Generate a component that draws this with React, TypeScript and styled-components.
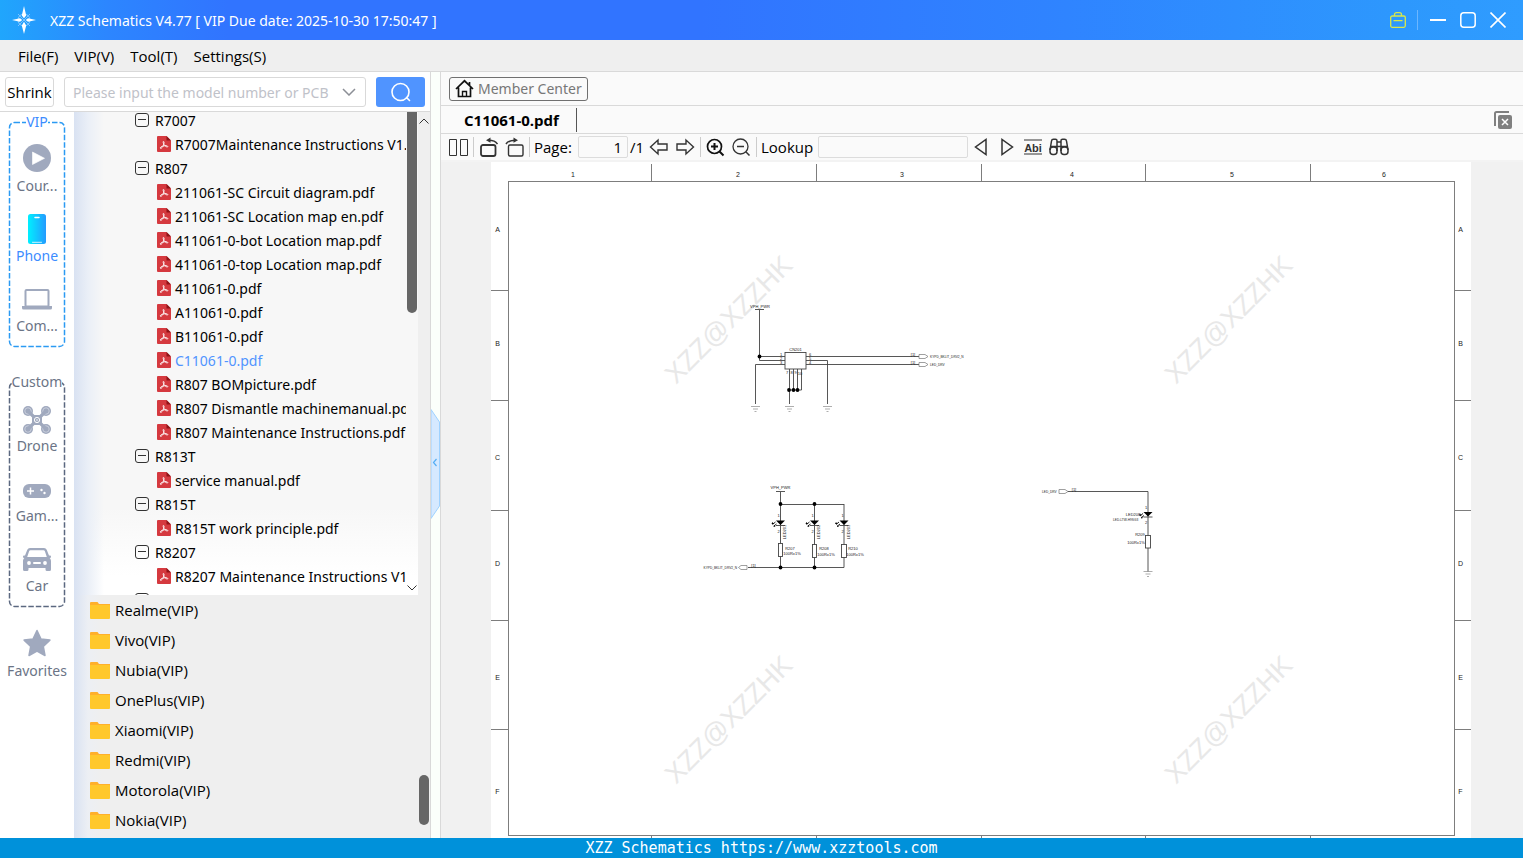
import React from "react";
import styled, { createGlobalStyle, css } from "styled-components";

const GlobalStyle = createGlobalStyle`
  * { box-sizing: border-box; }
  html, body, #root { height: 100%; }
  body {
    margin: 0;
    overflow: hidden;
    font-family: "Open Sans", "Noto Sans", sans-serif;
    font-size: 15px;
    line-height: 24px;
    color: #000;
    background: #f1f1f1;
  }
  button, input {
    font: inherit;
    color: inherit;
    margin: 0;
    padding: 0;
    border: 0;
    background: none;
  }
  button { cursor: pointer; }
  ul { list-style: none; margin: 0; padding: 0; }
  svg { display: block; flex: none; }
`;

const compactText = css`
  font-family: "Noto Sans", "Open Sans", sans-serif;
  font-size: 14px;
`;

const Window = styled.div`
  height: 100vh;
  display: flex;
  flex-direction: column;
`;

const TitleBar = styled.header`
  height: 40px;
  flex: none;
  display: flex;
  align-items: center;
  gap: 14px;
  padding: 0 16px 0 12px;
  color: #fff;
  background: linear-gradient(90deg, #20a6fc 0%, #2c86ff 7%, #3174ff 15%, #3174ff 46%, #2f84ff 70%, #2d98fd 92%, #2f9cff 100%);
`;

const Title = styled.h1`
  ${compactText}
  flex: 1;
  margin: 0;
  padding-top: 2px;
  font-weight: 400;
  white-space: nowrap;
`;

const WindowButtons = styled.div`
  display: flex;
  align-items: center;
  gap: 12px;
`;

const WindowButton = styled.button`
  width: 18px;
  height: 20px;
  display: grid;
  place-items: center;
`;

const TitleDivider = styled.span`
  width: 1px;
  height: 20px;
  margin: 0 -1px 0 -2px;
  background: #6cb6ff;
`;

const MenuBar = styled.nav`
  height: 32px;
  flex: none;
  display: flex;
  align-items: center;
  gap: 16px;
  padding: 0 18px;
  background: #efefef;
  border-bottom: 1px solid #d9d9d9;
`;

const MenuItem = styled.button`
  white-space: nowrap;
`;

const Body = styled.div`
  flex: 1;
  min-height: 0;
  display: flex;
`;

const LeftPanel = styled.section`
  width: 431px;
  flex: none;
  display: flex;
  flex-direction: column;
  border-right: 1px solid #d9d9d9;
  background: #fff;
`;

const SearchRow = styled.form`
  height: 40px;
  flex: none;
  display: flex;
  align-items: center;
  gap: 10px;
  padding: 0 5px;
  border-bottom: 1px solid #d9d9d9;
`;

const ShrinkButton = styled.button`
  width: 49px;
  height: 30px;
  border: 1px solid #d9d9d9;
  border-radius: 3px;
`;

const ModelBox = styled.div`
  flex: 1;
  height: 30px;
  display: flex;
  align-items: center;
  gap: 6px;
  padding: 0 9px 0 8px;
  border: 1px solid #d9d9d9;
  border-radius: 3px;
`;

const ModelInput = styled.input`
  ${compactText}
  flex: 1;
  min-width: 0;
  padding-top: 2px;
  outline: none;
  &::placeholder { color: #bfc2c9; opacity: 1; }
`;

const SearchButton = styled.button`
  width: 49px;
  height: 30px;
  display: grid;
  place-items: center;
  border-radius: 3px;
  background: #5094ff;
`;

const LeftContent = styled.div`
  flex: 1;
  min-height: 0;
  display: flex;
`;

const SideNav = styled.nav`
  ${compactText}
  width: 74px;
  flex: none;
`;

const SideGroup = styled.fieldset<{ $color: string }>`
  position: relative;
  height: 236px;
  margin: 0 8px 24px;
  padding: 9px 0 0;
  border: 0;
  color: ${(p) => p.$color};
  &:last-of-type { margin-bottom: 18px; }
`;

const SideLegend = styled.legend`
  position: relative;
  z-index: 1;
  margin: 0 auto;
  padding: 0;
  line-height: 20px;
  background: #fff;
`;

const DashedFrame = styled.svg`
  position: absolute;
  top: -11px;
  left: 0;
`;

const SideItem = styled.button<{ $active?: boolean }>`
  width: 100%;
  height: 70px;
  display: flex;
  flex-direction: column;
  align-items: center;
  color: ${(p) => (p.$active ? "#3c8cff" : "#6b7486")};
  line-height: 22px;
  white-space: nowrap;
`;

const SideIcon = styled.span`
  height: 34px;
  display: grid;
  place-items: center;
`;

const TreePane = styled.div`
  flex: 1;
  min-width: 0;
  display: flex;
  flex-direction: column;
  background: linear-gradient(90deg, #d9e2f2 0, #eceff4 14px, rgba(239, 239, 239, 0) 28px), #efefef;
`;

const TreeArea = styled.div`
  flex: 1;
  min-height: 0;
  display: flex;
`;

const TreeClip = styled.div`
  ${compactText}
  flex: 1;
  min-width: 0;
  overflow: hidden;
  background:
    linear-gradient(90deg, #d9e2f2 0, #eaeff7 14px, rgba(247, 247, 247, 0) 30px),
    linear-gradient(180deg, #f7f7f7 0, #f7f7f7 82%, #fff 96%);
`;

const TreeList = styled.ul`
  margin-top: -4px;
`;

const TreeRow = styled.li<{ $level: number }>`
  height: 24px;
  padding-left: ${(p) => (p.$level === 0 ? 61 : 83)}px;
`;

const TreeButton = styled.button<{ $active?: boolean }>`
  width: 100%;
  height: 24px;
  display: flex;
  align-items: center;
  gap: ${(p) => (p.$active === undefined ? 6 : 4)}px;
  overflow: hidden;
  white-space: nowrap;
  color: ${(p) => (p.$active ? "#5094ff" : "#000")};
`;

const TreeLabel = styled.span`
  padding-top: 2px;
`;

const InnerScroll = styled.div`
  width: 12px;
  flex: none;
  display: flex;
  flex-direction: column;
  justify-content: space-between;
  align-items: center;
  padding-bottom: 4px;
  background: linear-gradient(180deg, #f7f7f7 0, #f7f7f7 82%, #fff 96%);
`;

const InnerThumb = styled.span`
  width: 10px;
  height: 42%;
  border-radius: 0 0 5px 5px;
  background: #666;
`;

const OuterScroll = styled.div`
  width: 12px;
  flex: none;
  display: flex;
  justify-content: center;
  padding-top: 6px;
  background: #efefef;
`;

const FolderArea = styled.div`
  flex: none;
  display: flex;
  justify-content: space-between;
  align-items: flex-end;
  padding-bottom: 3px;
`;

const FolderRow = styled.button`
  height: 30px;
  display: flex;
  align-items: center;
  gap: 5px;
  padding-left: 16px;
`;

const OuterThumb = styled.span`
  width: 10px;
  height: 50px;
  margin: 0 1px 10px 0;
  border-radius: 5px;
  background: #666;
`;

const Gutter = styled.div`
  width: 10px;
  flex: none;
  display: flex;
  align-items: center;
  padding-top: 18px;
  background: #fbfffb;
  border-right: 1px solid #d9d9d9;
`;

const Viewer = styled.main`
  flex: 1;
  min-width: 0;
  display: flex;
  flex-direction: column;
  background: #f1f1f1;
`;

const ViewerBar = styled.div<{ $height: number }>`
  height: ${(p) => p.$height}px;
  flex: none;
  display: flex;
  align-items: center;
  padding: 0 8px;
  background: #fafafa;
  border-bottom: 1px solid #d9d9d9;
`;

const MemberButton = styled.button`
  ${compactText}
  height: 24px;
  display: flex;
  align-items: center;
  gap: 4px;
  padding: 0 5px;
  border: 1px solid #707070;
  border-radius: 3px;
  color: #777;
`;

const Tabs = styled.div`
  flex: 1;
  display: flex;
`;

const Tab = styled.button`
  height: 24px;
  padding: 0 17px 0 15px;
  border-right: 1px solid #555;
  font-weight: 700;
`;

const CloseTabs = styled.button`
  width: 24px;
  height: 24px;
  display: grid;
  place-items: center;
`;

const Toolbar = styled.div`
  height: 28px;
  flex: none;
  display: flex;
  align-items: center;
  padding: 0 7px;
  background: #fafafa;
  border-bottom: 2px solid #f3f3f3;
`;

const ToolGroup = styled.div<{ $last?: boolean }>`
  height: 20px;
  display: flex;
  align-items: center;
  gap: 6px;
  padding: 0 5px 0 4px;
  border-right: ${(p) => (p.$last ? "0" : "1px solid #ccc")};
  &:first-child { padding-left: 0; }
`;

const ToolButton = styled.button`
  width: 20px;
  height: 22px;
  display: grid;
  place-items: center;
  flex: none;
`;

const Field = styled.label<{ $text: number }>`
  display: grid;
  grid-template-columns: ${(p) => p.$text}px auto;
  align-items: center;
  margin-right: -3px;
  white-space: nowrap;
`;

const FieldInput = styled.input<{ $width: number }>`
  width: ${(p) => p.$width}px;
  height: 22px;
  padding: 0 5px;
  border: 1px solid #dcdcdc;
  border-radius: 2px;
  text-align: right;
  outline: none;
`;

const PageCount = styled.span`
  width: 13px;
  margin-left: -1px;
`;

const Canvas = styled.div`
  flex: 1;
  min-height: 0;
  padding: 0 52px 0 50px;
`;

const Sheet = styled.svg`
  width: 100%;
  height: 100%;
  background: #fff;
  font-family: "Liberation Sans", sans-serif;
`;

const StatusBar = styled.footer`
  height: 20px;
  flex: none;
  color: #fff;
  background: #0091da;
  font: 15px/20px "DejaVu Sans Mono", monospace;
  text-align: center;
`;

const MUTED = "#a0a9be";

const Logo = () => (
  <svg width="24" height="30" viewBox="0 0 24 30">
    <circle cx="12" cy="15" r="6" fill="none" stroke="#9fd3ff" strokeWidth="1" opacity=".8" />
    <path d="M6 9l12 12M18 9L6 21" stroke="#7cc3ff" strokeWidth="1" />
    <path d="M12 1l2.2 9.5L12 13.2l-2.200-2.700zM12 29l2.200-8.500L12 16.800l-2.200 3.700zM0 15l8-1.800L10.300 15 8 16.800zM24 15l-8-1.800L13.700 15l2.300 1.800z" fill="#fff" />
  </svg>
);

const PdfIcon = () => (
  <svg width="14" height="16" viewBox="0 0 14 16">
    <path d="M1 0H9.500L14 4.500V15a1 1 0 0 1-1 1h-12A1 1 0 0 1 0 15v-14A1 1 0 0 1 1 0z" fill="#d5393f" />
    <path d="M9.500 0L14 4.500h-4.500z" fill="#8f1418" />
    <path d="M6.500 5.500c1.200 0 .3 3.200-.7 5S3.200 13 3.300 11.800 7 9.600 9 9.700s2.200 1.300 1.200 1.300S6.900 9 6.400 7.300 6.200 5.500 6.500 5.500z" fill="none" stroke="#fff" strokeWidth=".9" />
  </svg>
);

const CollapseIcon = () => (
  <svg width="14" height="14" viewBox="0 0 14 14">
    <rect x=".5" y=".5" width="13" height="13" rx="2.500" fill="none" stroke="#333" />
    <path d="M3 6.500h8" stroke="#333" />
  </svg>
);

const FolderIcon = () => (
  <svg width="20" height="17" viewBox="0 0 20 17">
    <path d="M0 1a1 1 0 0 1 1-1h6.500l1.500 2H20v4H0z" fill="#ffb02b" />
    <path d="M0 3h19a1 1 0 0 1 1 1v12a1 1 0 0 1-1 1H1a1 1 0 0 1-1-1z" fill="#ffc82b" />
  </svg>
);

const CourseIcon = () => (
  <svg width="28" height="28" viewBox="0 0 28 28">
    <circle cx="14" cy="14" r="14" fill={MUTED} />
    <path d="M9.500 8v12.500l12-6.200z" fill="#fff" stroke="#fff" strokeWidth=".6" strokeLinejoin="round" />
  </svg>
);

const PhoneIcon = () => (
  <svg width="18" height="32" viewBox="0 -2 18 32">
    <defs>
      <linearGradient id="phoneFill" x1="0" y1="0" x2="1" y2="0">
        <stop offset="0" stopColor="#00f0ff" />
        <stop offset="1" stopColor="#249bff" />
      </linearGradient>
    </defs>
    <rect width="18" height="30" rx="2.500" fill="url(#phoneFill)" />
    <path d="M7 3.500h4" stroke="#fff" strokeWidth="1.500" strokeLinecap="round" />
    <path d="M4.500 28.300h9" stroke="#fff" strokeWidth=".8" strokeLinecap="round" />
  </svg>
);

const ComputerIcon = () => (
  <svg width="30" height="24" viewBox="0 -2 30 24">
    <rect x="3.500" y="2" width="23" height="16.500" rx="1" fill="none" stroke={MUTED} strokeWidth="2" />
    <path d="M0 18h30v2a1.500 1.500 0 0 1-1.500 1.500h-27A1.500 1.500 0 0 1 0 20z" fill={MUTED} />
  </svg>
);

const rotors = [[5, 5], [23, 5], [5, 23], [23, 23]];

const DroneIcon = () => (
  <svg width="28" height="32" viewBox="0 -4 28 32">
    {rotors.map(([x, y]) => (
      <g key={`${x}-${y}`}>
        <circle cx={x} cy={y} r="5" fill={MUTED} />
        <circle cx={x} cy={y} r="3.200" fill="none" stroke="#d3d8e3" strokeWidth=".8" />
      </g>
    ))}
    <path d="M4.500 4.500l19 19M23.500 4.500l-19 19" stroke={MUTED} strokeWidth="3.200" strokeLinecap="round" />
    <rect x="9" y="9" width="10" height="10" rx="3" fill={MUTED} />
    <circle cx="14" cy="14" r="2.600" fill="none" stroke="#fff" />
    <circle cx="14" cy="14" r=".8" fill="#fff" />
  </svg>
);

const GameIcon = () => (
  <svg width="28" height="20" viewBox="0 -6 28 20">
    <rect width="28" height="14" rx="6" fill={MUTED} />
    <path d="M7.500 3.500v7M4 7h7" stroke="#fff" strokeWidth="1.500" />
    <circle cx="18.500" cy="6" r="1.200" fill="#fff" />
    <circle cx="21.500" cy="9" r="1.200" fill="#fff" />
  </svg>
);

const CarIcon = () => (
  <svg width="28" height="26" viewBox="0 -3 28 26">
    <path d="M7 0h14a3 3 0 0 1 2.700 1.800L26 7.500h1a1 1 0 0 1 1 1c0 1-.6 1.500-1.400 1.500.7.700 1.400 1.700 1.400 3V21.500a1.500 1.500 0 0 1-1.500 1.500H24a1.500 1.500 0 0 1-1.500-1.500V20h-17v1.500A1.500 1.500 0 0 1 4 23H1.500A1.500 1.500 0 0 1 0 21.500V13c0-1.300.7-2.300 1.400-3C.6 10 0 9.500 0 8.500a1 1 0 0 1 1-1h1L4.300 1.800A3 3 0 0 1 7 0z" fill={MUTED} />
    <path d="M7.500 2.200h13a1.500 1.500 0 0 1 1.400 1L23.800 9H4.200l1.900-5.800a1.500 1.500 0 0 1 1.400-1z" fill="#fff" />
    <circle cx="6" cy="15" r="1.900" fill="#fff" />
    <circle cx="22" cy="15" r="1.900" fill="#fff" />
    <path d="M11 15h6" stroke="#fff" strokeWidth="2" strokeLinecap="round" />
  </svg>
);

const StarIcon = () => (
  <svg width="28" height="28" viewBox="0 0 28 28">
    <path d="M14 1.500l3.900 8.400 9 1.200-6.600 6.300 1.700 9.100-8-4.500-8 4.500 1.700-9.100L1.100 11.100l9-1.200z" fill={MUTED} stroke={MUTED} strokeWidth="1.500" strokeLinejoin="round" />
  </svg>
);

const ToolIcon = ({ children }: { children: React.ReactNode }) => (
  <svg width="20" height="20" viewBox="0 0 20 20" fill="none" stroke="#333" strokeWidth="1.300">
    {children}
  </svg>
);

type SideEntry = { label: string; icon: React.ReactNode; active?: boolean };

const vipEntries: SideEntry[] = [
  { label: "Cour...", icon: <CourseIcon /> },
  { label: "Phone", icon: <PhoneIcon />, active: true },
  { label: "Com...", icon: <ComputerIcon /> },
];

const customEntries: SideEntry[] = [
  { label: "Drone", icon: <DroneIcon /> },
  { label: "Gam...", icon: <GameIcon /> },
  { label: "Car", icon: <CarIcon /> },
];

const tree = [
  { name: "R7007", files: ["R7007Maintenance Instructions V1.pdf"] },
  {
    name: "R807",
    files: [
      "211061-SC Circuit diagram.pdf",
      "211061-SC Location map en.pdf",
      "411061-0-bot Location map.pdf",
      "411061-0-top Location map.pdf",
      "411061-0.pdf",
      "A11061-0.pdf",
      "B11061-0.pdf",
      "C11061-0.pdf",
      "R807 BOMpicture.pdf",
      "R807 Dismantle machinemanual.pdf",
      "R807 Maintenance Instructions.pdf",
    ],
  },
  { name: "R813T", files: ["service manual.pdf"] },
  { name: "R815T", files: ["R815T work principle.pdf"] },
  { name: "R8207", files: ["R8207 Maintenance Instructions V1.pdf"] },
  { name: "", files: [] },
];

const folders = ["Realme", "Vivo", "Nubia", "OnePlus", "Xiaomi", "Redmi", "Motorola", "Nokia"];

function SideBox({ title, color, textColor, entries }: { title: string; color: string; textColor: string; entries: SideEntry[] }) {
  return (
    <SideGroup $color={textColor}>
      <SideLegend>{title}</SideLegend>
      <DashedFrame width="58" height="227" viewBox="0 0 58 227">
        <rect x="1.500" y="1.500" width="55" height="224" rx="5" fill="none" stroke={color} strokeWidth="1.500" strokeDasharray="5.500 2" />
      </DashedFrame>
      {entries.map((e) => (
        <SideItem key={e.label} $active={e.active}>
          <SideIcon>{e.icon}</SideIcon>
          {e.label}
        </SideItem>
      ))}
    </SideGroup>
  );
}

const Ground = ({ x, y }: { x: number; y: number }) => (
  <path d={`M${x - 4.5} ${y}h9M${x - 2.5} ${y + 2.5}h5M${x - 1} ${y + 5}h2`} stroke="#999" strokeWidth=".8" />
);

const Led = ({ x, y }: { x: number; y: number }) => (
  <g>
    <path d={`M${x - 4.5} ${y - 2.5}h9l-4.500 4.500z`} fill="#000" stroke="none" />
    <path d={`M${x - 4.5} ${y + 2.5}h9`} />
    <path d={`M${x - 5} ${y - 1}l-3 2.500M${x - 4} ${y + 1}l-2.500 2`} strokeWidth=".9" stroke="#000" />
    <path d={`M${x - 9} ${y + 1}l1-2 1.500 2zM${x - 7} ${y + 4}l.5-2 1.500 1.500z`} fill="#000" stroke="none" />
  </g>
);

const Dot = ({ x, y }: { x: number; y: number }) => <circle cx={x} cy={y} r="1.900" fill="#000" stroke="none" />;

const Port = ({ x, y, left }: { x: number; y: number; left?: boolean }) => (
  <path
    d={left ? `M${x + 8.5} ${y - 2}h-6l-2.500 2 2.500 2h6z` : `M${x} ${y - 2}h6l3 2-3 2h-6z`}
    fill="#fff"
    stroke="#777"
    strokeWidth=".7"
  />
);

const columnTicks = [651.5, 816.5, 981.5, 1145.5, 1310.5];
const rowTicks = [290.5, 400.5, 510.5, 620.5, 729.5];
const columns = [573, 738, 902, 1072, 1232, 1384];
const rows: [string, number][] = [["A", 229], ["B", 343], ["C", 457], ["D", 563], ["E", 677], ["F", 791]];
const marks = [[728, 320], [1228, 320], [728, 720], [1228, 720]];

function Schematic() {
  return (
    <Sheet viewBox="491 162 980 676" preserveAspectRatio="xMidYMin slice" role="img" aria-label="C11061-0 circuit diagram">
      <g fill="#e8e8e8" fontSize="27" textAnchor="middle">
        {marks.map(([x, y]) => (
          <text key={`${x}-${y}`} transform={`translate(${x + 7} ${y + 6}) rotate(-45)`}>XZZ@XZZHK</text>
        ))}
      </g>
      <g stroke="#7d7d7d" fill="none">
        <rect x="508.500" y="181.500" width="946" height="654" />
        {columnTicks.map((x) => (
          <path key={x} d={`M${x} 164v17M${x} 836v2`} />
        ))}
        {rowTicks.map((y) => (
          <path key={y} d={`M491 ${y}h17M1455 ${y}h16`} />
        ))}
      </g>
      <g fontSize="7" fill="#222" textAnchor="middle">
        {columns.map((x, i) => (
          <text key={x} x={x} y="176.500">{i + 1}</text>
        ))}
        {rows.map(([r, y]) => (
          <React.Fragment key={r}>
            <text x="497.500" y={y + 2.5}>{r}</text>
            <text x="1460.500" y={y + 2.5}>{r}</text>
          </React.Fragment>
        ))}
      </g>

      <g stroke="#444" strokeWidth=".9" fill="none">
        <path d="M755 309.500h9M759.500 310v50.500H785M759.500 356.500H785M785 364.500h-29.500V404" />
        <rect x="785" y="352.500" width="21" height="16.500" />
        <path d="M806 356.500h113M806 364.500h113M806 360.500h21.500V404" />
        <path d="M789.500 369v35M793.500 369v21M797.500 369v21M801.500 369v21H789" />
        <Dot x={759.5} y={356.5} />
        <Dot x={789} y={390} />
        <Dot x={793.5} y={390} />
        <Dot x={797.5} y={390} />
        <Ground x={755.5} y={406.5} />
        <Ground x={789.5} y={406.5} />
        <Ground x={827.5} y={406.5} />
        <Port x={919} y={356.5} />
        <Port x={919} y={364.5} />

        <path d="M776 491.500h9M780.500 492v75.500M780 504.500h64M814.500 504v63M844 504v63.500M748 567.500h96" />
        <rect x="778.500" y="543.500" width="4" height="13" fill="#fff" />
        <rect x="812.500" y="544.500" width="4" height="13" fill="#fff" />
        <rect x="841.500" y="544.500" width="5" height="13" fill="#fff" />
        <Led x={780.5} y={523} />
        <Led x={814.5} y={523} />
        <Led x={844} y={523} />
        <Dot x={780.5} y={504} />
        <Dot x={814.5} y={504} />
        <Dot x={780.5} y={567.5} />
        <Dot x={814.5} y={567.5} />
        <Port x={738.5} y={567.5} left />

        <path d="M1068 491.500h80V572" />
        <rect x="1145.500" y="535.500" width="5" height="12.500" fill="#fff" />
        <Led x={1148} y={514.5} />
        <Ground x={1148} y={571.5} />
        <Port x={1059} y={491.5} />
      </g>

      <g fontSize="4" fill="#222" textAnchor="middle">
        <text x="760" y="307.500">VPH_PWR</text>
        <text x="795.500" y="350.500">CN201</text>
        <text x="913" y="356">[1]</text>
        <text x="913" y="364">[1]</text>
        <text x="781" y="356">1</text>
        <text x="781" y="360">2</text>
        <text x="781" y="364">3</text>
        <text x="810" y="356">6</text>
        <text x="810" y="360">5</text>
        <text x="810" y="364">4</text>
        <text x="787" y="374">7</text>
        <text x="791.500" y="374">8</text>
        <text x="795.500" y="374">9</text>
        <text x="800" y="375">10</text>
        <text x="780.500" y="489">VPH_PWR</text>
        <text x="753.500" y="567">[1]</text>
        <text x="790" y="550">R207</text>
        <text x="792" y="554.500">100R±1%</text>
        <text x="824" y="550">R208</text>
        <text x="826" y="555.500">100R±1%</text>
        <text x="853" y="550">R210</text>
        <text x="855" y="555.500">100R±1%</text>
        <text x="1074" y="491">[1]</text>
        <text x="1133" y="515.500">LED208</text>
        <text x="1140" y="536">R209</text>
        <text x="1136" y="543.500">100R±1%</text>
        {[780, 814, 844].map((x, i) => (
          <React.Fragment key={x}>
            <text x={x - 1.5} y="517">1</text>
            <text x={x - 1.5} y="533">2</text>
            <text transform={`translate(${x + 5.5} 532) rotate(-90)`}>LED20{i + 1}</text>
          </React.Fragment>
        ))}
        <text x="1146" y="509">1</text>
        <text x="1146" y="524">2</text>
      </g>
      <g fontSize="3.200" fill="#222">
        <text x="930" y="357.800">KYPD_BKLIT_DRV2_N</text>
        <text x="930" y="366">LED_DRV</text>
        <text x="703.500" y="569">KYPD_BKLIT_DRV2_N</text>
        <text x="1042" y="493">LED_DRV</text>
        <text x="1113" y="521">LED-LTW-H9SG3</text>
      </g>
    </Sheet>
  );
}

export default function App() {
  return (
    <Window>
      <GlobalStyle />
      <TitleBar>
        <Logo />
        <Title>XZZ Schematics V4.77 [ VIP Due date: 2025-10-30 17:50:47 ]</Title>
        <WindowButtons>
          <WindowButton aria-label="License">
            <svg width="16" height="16" viewBox="0 0 16 16" fill="none" stroke="#d9e84a" strokeWidth="1.300">
              <rect x=".7" y="4" width="14.600" height="11.300" rx="1.500" />
              <path d="M4.500 4V2.700A2 2 0 0 1 6.500.7h3a2 2 0 0 1 2 2V4M3.500 8.700h9" />
            </svg>
          </WindowButton>
          <TitleDivider />
          <WindowButton aria-label="Minimize">
            <svg width="16" height="16" viewBox="0 0 16 16"><path d="M0 8h16" stroke="#fff" strokeWidth="2" /></svg>
          </WindowButton>
          <WindowButton aria-label="Maximize">
            <svg width="16" height="16" viewBox="0 0 16 16"><rect x=".8" y=".8" width="14.400" height="14.400" rx="3" fill="none" stroke="#fff" strokeWidth="1.500" /></svg>
          </WindowButton>
          <WindowButton aria-label="Close">
            <svg width="16" height="16" viewBox="0 0 16 16"><path d="M.5.500l15 15M15.500.500l-15 15" stroke="#fff" strokeWidth="1.600" /></svg>
          </WindowButton>
        </WindowButtons>
      </TitleBar>

      <MenuBar>
        {["File(F)", "VIP(V)", "Tool(T)", "Settings(S)"].map((m) => (
          <MenuItem key={m}>{m}</MenuItem>
        ))}
      </MenuBar>

      <Body>
        <LeftPanel>
          <SearchRow onSubmit={(e) => e.preventDefault()}>
            <ShrinkButton type="button">Shrink</ShrinkButton>
            <ModelBox>
              <ModelInput aria-label="Model number" placeholder="Please input the model number or PCB" />
              <svg width="14" height="8" viewBox="0 0 14 8"><path d="M1 1l6 6 6-6" fill="none" stroke="#8c8f96" strokeWidth="1.500" /></svg>
            </ModelBox>
            <SearchButton aria-label="Search">
              <svg width="20" height="20" viewBox="0 0 20 20" fill="none" stroke="#fff" strokeWidth="1.600">
                <circle cx="9.500" cy="10" r="8.500" />
                <path d="M15.500 15.500l3 3" strokeLinecap="round" />
              </svg>
            </SearchButton>
          </SearchRow>

          <LeftContent>
            <SideNav>
              <SideBox title="VIP" color="#2b9af3" textColor="#3c8cff" entries={vipEntries} />
              <SideBox title="Custom" color="#5b6880" textColor="#6b7486" entries={customEntries} />
              <SideItem>
                <SideIcon><StarIcon /></SideIcon>
                Favorites
              </SideItem>
            </SideNav>

            <TreePane>
              <TreeArea>
                <TreeClip>
                  <TreeList>
                    {tree.map((node) => (
                      <React.Fragment key={node.name}>
                        <TreeRow $level={0}>
                          <TreeButton><CollapseIcon /><TreeLabel>{node.name}</TreeLabel></TreeButton>
                        </TreeRow>
                        {node.files.map((f) => (
                          <TreeRow key={f} $level={1}>
                            <TreeButton $active={f === "C11061-0.pdf"}><PdfIcon /><TreeLabel>{f}</TreeLabel></TreeButton>
                          </TreeRow>
                        ))}
                      </React.Fragment>
                    ))}
                  </TreeList>
                </TreeClip>
                <InnerScroll>
                  <InnerThumb />
                  <svg width="10" height="6" viewBox="0 0 10 6"><path d="M.5.500L5 5 9.500.500" fill="none" stroke="#333" /></svg>
                </InnerScroll>
                <OuterScroll>
                  <svg width="10" height="6" viewBox="0 0 10 6"><path d="M.5 5.500L5 1l4.500 4.500" fill="none" stroke="#333" /></svg>
                </OuterScroll>
              </TreeArea>
              <FolderArea>
                <ul>
                  {folders.map((f) => (
                    <li key={f}>
                      <FolderRow><FolderIcon />{f}(VIP)</FolderRow>
                    </li>
                  ))}
                </ul>
                <OuterThumb />
              </FolderArea>
            </TreePane>
          </LeftContent>
        </LeftPanel>

        <Gutter>
          <button aria-label="Collapse panel">
            <svg width="9" height="111" viewBox="0 0 9 111">
              <path d="M0 .5L8.500 13v84L0 109.500z" fill="#d6e9ff" stroke="#9fd2ff" />
              <path d="M5.500 50L2.500 53.500l3 3.500" fill="none" stroke="#55aef5" strokeWidth="1.200" />
            </svg>
          </button>
        </Gutter>

        <Viewer>
          <ViewerBar $height={34}>
            <MemberButton>
              <svg width="19" height="19" viewBox="0 0 19 19" fill="none" stroke="#111" strokeWidth="1.700">
                <path d="M1 10L9.500 1.800 18 10M3.500 8.500V17.500h12V8.500M14.500 3v3" />
                <path d="M7.500 17.500v-5h4v5" strokeWidth="1.400" />
              </svg>
              Member Center
            </MemberButton>
          </ViewerBar>
          <ViewerBar $height={28}>
            <Tabs>
              <Tab>C11061-0.pdf</Tab>
            </Tabs>
            <CloseTabs aria-label="Close all tabs">
              <svg width="18" height="18" viewBox="0 0 18 18">
                <path d="M1 15V2.500A1.500 1.500 0 0 1 2.500 1H15" fill="none" stroke="#808080" strokeWidth="2" />
                <rect x="4" y="4" width="14" height="14" rx="2" fill="#808080" />
                <path d="M8 8l6 6M14 8l-6 6" stroke="#fff" strokeWidth="1.500" />
              </svg>
            </CloseTabs>
          </ViewerBar>
          <Toolbar>
            <ToolGroup>
              <ToolButton aria-label="Two pages">
                <ToolIcon><path d="M1.500 2.500h7v16h-7zM12.500 2.500h7v16h-7z" strokeWidth="1" /></ToolIcon>
              </ToolButton>
            </ToolGroup>
            <ToolGroup>
              <ToolButton aria-label="Rotate left">
                <ToolIcon>
                  <rect x="3" y="8" width="14.500" height="11" rx="2" strokeWidth="1.800" />
                  <path d="M19.500 7C18 4.500 14.500 3.300 10.500 3.300" strokeWidth="1.500" />
                  <path d="M12.500.5L8 3.300l4.500 2.500z" fill="#333" stroke="none" />
                </ToolIcon>
              </ToolButton>
              <ToolButton aria-label="Rotate right">
                <ToolIcon>
                  <rect x="4.500" y="8" width="14.500" height="11" rx="1.500" strokeWidth="1.400" />
                  <path d="M2 7C3.500 4.500 7 3.300 11.500 3.300" strokeWidth="1.500" />
                  <path d="M9.500.5L14 3.300 9.500 5.800z" fill="#333" stroke="none" />
                </ToolIcon>
              </ToolButton>
            </ToolGroup>
            <ToolGroup>
              <Field $text={44}>
                Page:
                <FieldInput $width={50} defaultValue="1" />
              </Field>
              <PageCount>/1</PageCount>
              <ToolButton aria-label="Previous page">
                <ToolIcon><path d="M1.500 10L9 3v4h9v6H9v4z" strokeWidth="1.400" /></ToolIcon>
              </ToolButton>
              <ToolButton aria-label="Next page">
                <ToolIcon><path d="M18.500 10L11 3v4H2v6h9v4z" strokeWidth="1.400" /></ToolIcon>
              </ToolButton>
            </ToolGroup>
            <ToolGroup>
              <ToolButton aria-label="Zoom in">
                <ToolIcon>
                  <circle cx="9.500" cy="9.500" r="7" strokeWidth="1.700" stroke="#111" />
                  <path d="M14.500 14.500L18.500 18.500M9.500 6v7M6 9.500h7" strokeWidth="2" stroke="#111" />
                </ToolIcon>
              </ToolButton>
              <ToolButton aria-label="Zoom out">
                <ToolIcon>
                  <circle cx="9.500" cy="9.500" r="7.500" />
                  <path d="M14.800 14.800L18.500 18.500M6 9.500h7" strokeWidth="1.500" />
                </ToolIcon>
              </ToolButton>
            </ToolGroup>
            <ToolGroup $last>
              <Field $text={57}>
                Lookup
                <FieldInput $width={150} />
              </Field>
              <ToolButton aria-label="Find previous">
                <ToolIcon><path d="M15 2.500v15L4.500 10z" strokeWidth="1.500" /></ToolIcon>
              </ToolButton>
              <ToolButton aria-label="Find next">
                <ToolIcon><path d="M5 2.500v15L15.500 10z" strokeWidth="1.500" /></ToolIcon>
              </ToolButton>
              <ToolButton aria-label="Match whole word">
                <ToolIcon>
                  <path d="M1 3h18M1 17h18" strokeWidth="1" />
                  <text x="10" y="14.500" textAnchor="middle" fontFamily="Liberation Sans, sans-serif" fontWeight="700" fontSize="11" fill="#333" stroke="none">Abi</text>
                </ToolIcon>
              </ToolButton>
              <ToolButton aria-label="Find">
                <ToolIcon>
                  <path d="M1 13L2.500 4a2 2 0 0 1 2-1.800h2A1.500 1.500 0 0 1 8 3.700V14M19 13L17.500 4a2 2 0 0 0-2-1.800h-2A1.500 1.500 0 0 0 12 3.700V14M8 5h4M8 9.500h4M2 9.500h6M12 9.500h6" strokeWidth="1.500" />
                  <rect x="1" y="10" width="7" height="7.500" rx="3" strokeWidth="1.500" />
                  <rect x="12" y="10" width="7" height="7.500" rx="3" strokeWidth="1.500" />
                </ToolIcon>
              </ToolButton>
            </ToolGroup>
          </Toolbar>
          <Canvas>
            <Schematic />
          </Canvas>
        </Viewer>
      </Body>

      <StatusBar>XZZ Schematics https://www.xzztools.com</StatusBar>
    </Window>
  );
}
